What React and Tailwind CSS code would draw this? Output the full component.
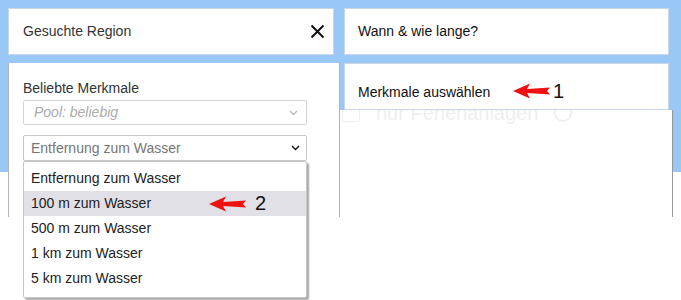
import React from "react";

function Arrow({ className }) {
  return (
    <svg className={className} width="38" height="16" viewBox="0 0 38 16">
      <polygon points="0,8 17,0.5 14,6 37,4.5 34,8 37,11.5 14,10 17,15.5" fill="#ee1111" />
    </svg>
  );
}

function Chevron({ color = "#111", w = 9 }) {
  return (
    <svg width={w} height="6" viewBox="0 0 9 6">
      <path d="M1 1 L4.5 4.5 L8 1" fill="none" stroke={color} strokeWidth="1.4" />
    </svg>
  );
}

export default function App() {
  const items = [
    "Entfernung zum Wasser",
    "100 m zum Wasser",
    "500 m zum Wasser",
    "1 km zum Wasser",
    "5 km zum Wasser",
  ];
  return (
    <div
      className="relative w-[681px] h-[300px] overflow-hidden bg-white text-[14px]"
      style={{ fontFamily: '"Liberation Sans", Arial, sans-serif' }}
    >
      <div className="h-[172px] bg-[#99c8f7] flex items-start pl-2 pt-2">
        {/* left column */}
        <div className="flex flex-col w-[332px] shrink-0">
          <div className="shrink-0 w-[326px] h-[47px] bg-white border border-[#c9d7e5] flex items-center justify-between pl-[14px] pr-[8px] text-[#333]">
            <span>Gesuchte Region</span>
            <svg width="15" height="15" viewBox="0 0 15 15">
              <path d="M1.5 1.5 L13.5 13.5 M13.5 1.5 L1.5 13.5" stroke="#111" strokeWidth="2" />
            </svg>
          </div>
          <div className="shrink-0 mt-2 w-[332px] h-[154px] bg-white border-l border-r border-[#b5b5b5] pl-[14px] pt-[15px] relative z-10">
            <div className="text-[#333] leading-5">Beliebte Merkmale</div>
            <div className="mt-[2px] w-[284px] h-[25px] border border-[#d4d4d4] rounded-[2px] flex items-center justify-between pl-[10px] pr-[8px]">
              <span className="italic text-[#ababab] text-[14px]">Pool: beliebig</span>
              <Chevron color="#bbb" />
            </div>
            <div className="relative mt-[10px] w-[284px]">
              <div className="h-[26px] border border-[#c8c8c8] rounded-[2px] flex items-center justify-between pl-[7px] pr-[6px]">
                <span className="text-[#767676]">Entfernung zum Wasser</span>
                <Chevron color="#111" />
              </div>
              <div className="absolute left-0 top-full w-[284px] h-[137px] bg-white border border-[#c8c8c8] rounded-[2px] shadow-[2px_2px_2px_rgba(0,0,0,0.35)] pt-[4px] z-20">
                {items.map((t, i) => (
                  <div
                    key={t}
                    className={
                      "relative h-[25px] flex items-center pl-[7px] text-[#222] " +
                      (i === 1 ? "bg-[#e1e0e6]" : "")
                    }
                  >
                    <span>{t}</span>
                    {i === 1 && (
                      <>
                        <Arrow className="absolute left-[185px] top-[5px]" />
                        <span className="absolute left-[231px] top-[0px] text-[20px] leading-[25px] text-[#111]">2</span>
                      </>
                    )}
                  </div>
                ))}
              </div>
            </div>
          </div>
        </div>
        {/* right column */}
        <div className="flex flex-col ml-[4px] w-[325px] shrink-0">
          <div className="shrink-0 w-[325px] h-[47px] bg-white border border-[#c9d7e5] flex items-center pl-[13px] text-[#111]">
            Wann &amp; wie lange?
          </div>
          <div className="shrink-0 mt-2 w-[325px] h-[47px] bg-white border border-[#c9d7e5] relative z-10 flex items-start pt-[18px] pl-[13px] text-[#111]">
            <span className="leading-5">Merkmale auswählen</span>
            <Arrow className="absolute left-[168px] top-[19px]" />
            <span className="absolute left-[208px] top-[15px] text-[20px] leading-6 text-[#111]">1</span>
          </div>
          <div className="shrink-0 -ml-[4px] w-[333px] h-[107px] bg-white border-r border-[#999] overflow-hidden">
            <div className="-mt-[9px] flex items-center pl-[2px] gap-[16px] text-[#efefef]">
              <div className="w-[18px] h-[18px] border border-[#f0f0f0] rounded-[2px]" />
              <span className="text-[20px] leading-6">nur Ferienanlagen</span>
              <span className="w-[18px] h-[18px] rounded-full border-2 border-[#efefef]" />
            </div>
          </div>
        </div>
      </div>
    </div>
  );
}
